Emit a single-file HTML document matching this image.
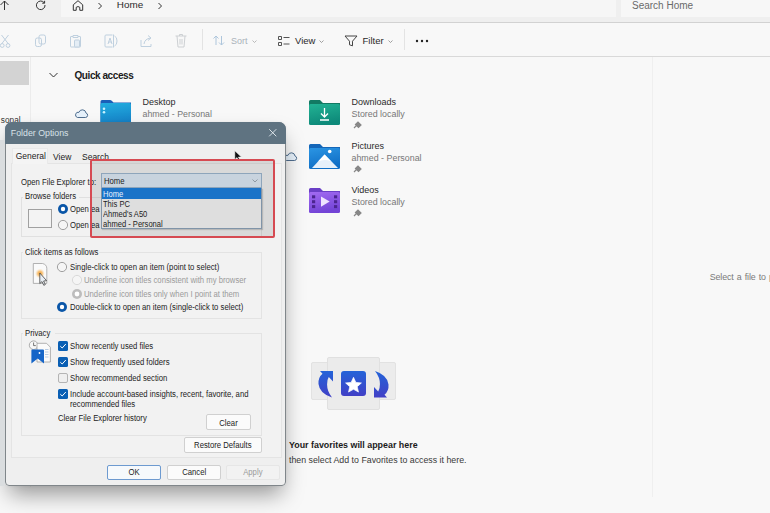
<!DOCTYPE html>
<html><head><meta charset="utf-8"><style>
html,body{margin:0;padding:0;width:770px;height:513px;overflow:hidden;background:#f8f8f8;font-family:"Liberation Sans", sans-serif}
.t{position:absolute;white-space:nowrap;line-height:1}
.r{position:absolute}
</style></head><body>
<div class="r" style="left:0px;top:0px;width:770px;height:22px;background:#efefef"></div>
<div class="r" style="left:61px;top:0px;width:555px;height:17px;background:#f6f6f6"></div>
<div class="r" style="left:621px;top:0px;width:149px;height:17px;background:#f7f7f7"></div>
<div class="r" style="left:0px;top:22px;width:770px;height:1px;background:#d2d2d2"></div>
<div class="r" style="left:0px;top:23px;width:770px;height:33px;background:#f8f8f8"></div>
<div class="r" style="left:0px;top:56px;width:770px;height:1px;background:#d9d9d9"></div>
<div class="r" style="left:0px;top:57px;width:770px;height:456px;background:#f8f8f8"></div>
<div class="r" style="left:30px;top:57px;width:1px;height:430px;background:#ececec"></div>
<div class="r" style="left:0px;top:61px;width:29px;height:24px;background:#d3d3d3"></div>
<div class="r" style="left:652px;top:57px;width:1px;height:440px;background:#efefef"></div>
<svg class="r" style="left:0px;top:0px" width="120" height="22" viewBox="0 0 120 22" fill="none" stroke="#333" stroke-width="1">
<path d="M4.5 10 V1 M0.5 5 L4.5 1 L8.5 5"/>
<path d="M44.2 2.8 A4.3 4.3 0 1 0 45 5" /><path d="M44.6 0.8 V3.2 H42.2"/>
<path d="M73.3 10.3 V4.8 L78 0.7 L82.7 4.8 V10.3 H79.8 V7.3 Q78 5.8 76.2 7.3 V10.3 Z"/>
<path d="M98.5 3 L101.5 6 L98.5 9"/>
</svg>
<div class="t" style="left:116.8px;top:0.42px;font-size:9.9px;color:#2a2a2a;font-weight:normal;letter-spacing:0px;">Home</div>
<svg class="r" style="left:150px;top:0px" width="20" height="22" fill="none" stroke="#333" stroke-width="1"><path d="M8.5 3 L11.5 6 L8.5 9"/></svg>
<div class="t" style="left:632px;top:0.54px;font-size:10px;color:#6a6a6a;font-weight:normal;letter-spacing:0px;">Search Home</div>
<svg class="r" style="left:0px;top:24px" width="200" height="33" fill="none" stroke="#bfd0df" stroke-width="1">
<path d="M1.5 11 L8.5 20 M8.5 11 L1.5 20"/><circle cx="2.2" cy="21.5" r="1.9"/><circle cx="8" cy="21.5" r="1.9"/>
<rect x="35.5" y="14" width="6" height="8.5" rx="1.8"/><rect x="39" y="11" width="6.5" height="9" rx="1.8"/>
<path d="M73 12.5 H71 Q70.5 12.5 70.5 13 V22.5 Q70.5 23 71 23 H80 Q80.5 23 80.5 22.5 V13 Q80.5 12.5 80 12.5 H78 M73 11.5 H78 V13.5 H73 Z"/><rect x="74.5" y="16" width="5" height="7" rx="0.8" fill="#e4edf5"/>
<path d="M112.5 11 H106 Q105 11 105 12 V22 Q105 23 106 23 H112.5 M108 20 L110 14 L112 20 M108.7 18 H111.3 M113.5 10.5 V23.5 M114.5 12 Q117 13 117 17 Q117 21 114.5 22"/>
<path d="M141 16 V22.5 H151 V20 M144 20 Q144.5 15 150.5 14 M148 11.5 L151 14 L148 16.5"/>
<path stroke="#cdd0d3" d="M175.5 12 H186.5 M177 12 L178 23 H184 L185 12 M179.5 12 V10.5 H182.5 V12 M180 15 V20.5 M182 15 V20.5"/>
</svg>
<div class="r" style="left:202px;top:29px;width:1px;height:21px;background:#e3e3e3"></div>
<svg class="r" style="left:210px;top:23px" width="240" height="33" fill="none" stroke-width="1">
<path stroke="#aec6dc" d="M6 13 V22 M3.5 15.5 L6 13 L8.5 15.5 M11.5 13 V22 M9 19.5 L11.5 22 L14 19.5"/>
<path stroke="#555" d="M68.5 13.5 h3 v3 h-3 z M68.5 19.5 h3 v3 h-3 z M73.5 14.5 H79.5 M73.5 21 H79.5"/>
<path stroke="#444" d="M135 13 H147 L142.5 18.2 V22.8 L139.5 21.8 V18.2 Z"/>
</svg>
<div class="t" style="left:231px;top:36.78px;font-size:9px;color:#a9b2ba;font-weight:normal;letter-spacing:0px;">Sort</div>
<svg class="r" style="left:251px;top:39px" width="8" height="6" fill="none" stroke="#aaa" stroke-width="0.8"><path d="M1.5 1.5 L3.5 3.5 L5.5 1.5"/></svg>
<div class="t" style="left:295px;top:36.36px;font-size:9.5px;color:#2a2a2a;font-weight:normal;letter-spacing:0px;">View</div>
<svg class="r" style="left:318px;top:39px" width="8" height="6" fill="none" stroke="#888" stroke-width="0.8"><path d="M1.5 1.5 L3.5 3.5 L5.5 1.5"/></svg>
<div class="t" style="left:362.5px;top:36.26px;font-size:9.5px;color:#2a2a2a;font-weight:normal;letter-spacing:0px;">Filter</div>
<svg class="r" style="left:387px;top:39px" width="8" height="6" fill="none" stroke="#888" stroke-width="0.8"><path d="M1.5 1.5 L3.5 3.5 L5.5 1.5"/></svg>
<div class="r" style="left:404px;top:29px;width:1px;height:21px;background:#e3e3e3"></div>
<svg class="r" style="left:414px;top:38px" width="18" height="6"><circle cx="3" cy="3" r="1.2" fill="#222"/><circle cx="8" cy="3" r="1.2" fill="#222"/><circle cx="13" cy="3" r="1.2" fill="#222"/></svg>
<svg class="r" style="left:48px;top:71px" width="12" height="8" fill="none" stroke="#333" stroke-width="1"><path d="M1.5 2 L5.5 6 L9.5 2"/></svg>
<div class="t" style="left:74.5px;top:71.23px;font-size:10px;color:#1b1b1b;font-weight:bold;letter-spacing:-0.43px;">Quick access</div>
<svg class="r" style="left:100px;top:99px" width="32" height="28">
<defs><linearGradient id="gdk" x1="0" y1="0" x2="0.2" y2="1"><stop offset="0" stop-color="#22aee0"/><stop offset="1" stop-color="#1580c6"/></linearGradient></defs>
<path d="M0.5 2.5 Q0.5 1 2 1 H10 Q11 1 12 2 L13.5 3.5 H31 V27 H0.5 Z" fill="#1a5fb8"/>
<path d="M0.5 5.5 Q0.5 4 2 4 H29.5 Q31 4 31 5.5 V27 H0.5 Z" fill="url(#gdk)"/>
<circle cx="4" cy="9.8" r="1.3" fill="#c9f2ff"/><circle cx="4" cy="13.2" r="1.3" fill="#c9f2ff"/>
</svg>
<svg class="r" style="left:74px;top:107.5px" width="15" height="11" fill="#e6f1fb" stroke="#3d5f82" stroke-width="0.9"><path d="M3.5 9.5 H11.5 A2.3 2.3 0 0 0 12 5 A3.6 3.6 0 0 0 5 4.3 A2.7 2.7 0 0 0 3.5 9.5 Z"/></svg>
<div class="t" style="left:142.5px;top:97.98px;font-size:9px;color:#2b2b2b;font-weight:normal;letter-spacing:0px;">Desktop</div>
<div class="t" style="left:142.5px;top:109.55px;font-size:8.8px;color:#777;font-weight:normal;letter-spacing:0px;">ahmed - Personal</div>
<div class="t" style="left:0.8px;top:116.37px;font-size:8.3px;color:#333;font-weight:normal;letter-spacing:0px;">sonal</div>
<div class="t" style="left:-5px;top:350.54px;font-size:10px;color:#555;font-weight:normal;letter-spacing:0px;">C</div>
<div class="r" style="left:0px;top:331px;width:5px;height:1px;background:rgba(255,255,255,0.5)"></div>
<svg class="r" style="left:309px;top:100px" width="32" height="26">
<defs><linearGradient id="gd" x1="0" y1="0" x2="0.3" y2="1"><stop offset="0" stop-color="#22b394"/><stop offset="1" stop-color="#0e8a7a"/></linearGradient></defs>
<path d="M0 1.5 Q0 0 1.5 0 H11 L14 3 H31 V20 H0 Z" fill="#127a63"/>
<path d="M0 5.5 Q0 4 1.5 4 H29.5 Q31 4 31 5.5 V23.5 Q31 25 29.5 25 H1.5 Q0 25 0 23.5 Z" fill="url(#gd)"/><path d="M15.5 8 V17 M12 13.5 L15.5 17 L19 13.5 M11 20 H20" stroke="#fff" stroke-width="1.3" fill="none"/></svg>
<svg class="r" style="left:309px;top:144px" width="32" height="26">
<defs><linearGradient id="gp" x1="0" y1="0" x2="0.3" y2="1"><stop offset="0" stop-color="#2b95e3"/><stop offset="1" stop-color="#106fc6"/></linearGradient></defs>
<path d="M0 1.5 Q0 0 1.5 0 H11 L14 3 H31 V20 H0 Z" fill="#1466b8"/>
<path d="M0 5.5 Q0 4 1.5 4 H29.5 Q31 4 31 5.5 V23.5 Q31 25 29.5 25 H1.5 Q0 25 0 23.5 Z" fill="url(#gp)"/><path d="M3 24 L15.6 10.4 L29 24 Z" fill="#e6f1fb"/><path d="M9 17.5 L15.6 10.4 L22 17.3 Q15.5 14.5 9 17.5 Z" fill="#ffffff"/><circle cx="20.7" cy="7.5" r="1.8" fill="#fff"/></svg>
<svg class="r" style="left:309px;top:188px" width="32" height="26">
<defs><linearGradient id="gv" x1="0" y1="0" x2="0.3" y2="1"><stop offset="0" stop-color="#a36bf2"/><stop offset="1" stop-color="#7344d6"/></linearGradient></defs>
<path d="M0 1.5 Q0 0 1.5 0 H11 L14 3 H31 V20 H0 Z" fill="#6a3fc6"/>
<path d="M0 5.5 Q0 4 1.5 4 H29.5 Q31 4 31 5.5 V23.5 Q31 25 29.5 25 H1.5 Q0 25 0 23.5 Z" fill="url(#gv)"/><path d="M12 8.6 V18.7 L20.7 13.6 Z" fill="#efe4ff"/><rect x="3" y="7.3" width="3.2" height="3" fill="#4b2590"/><rect x="3" y="12.2" width="3.2" height="3" fill="#4b2590"/><rect x="3" y="17.1" width="3.2" height="3" fill="#4b2590"/><rect x="25" y="7.3" width="3.2" height="3" fill="#4b2590"/><rect x="25" y="12.2" width="3.2" height="3" fill="#4b2590"/><rect x="25" y="17.1" width="3.2" height="3" fill="#4b2590"/></svg>
<div class="t" style="left:351.5px;top:97.88px;font-size:9px;color:#2b2b2b;font-weight:normal;letter-spacing:0px;">Downloads</div>
<div class="t" style="left:351.5px;top:110.27px;font-size:8.9px;color:#777;font-weight:normal;letter-spacing:0px;">Stored locally</div>
<svg class="r" style="left:353px;top:121.4px" width="10" height="8"><path d="M1 7 L3.5 4.5 M2.5 3.5 L5 1 L8 4 L5.5 6.5 Z" stroke="#888" stroke-width="1.2" fill="#888"/></svg>
<div class="t" style="left:351.5px;top:141.88px;font-size:9px;color:#2b2b2b;font-weight:normal;letter-spacing:0px;">Pictures</div>
<div class="t" style="left:351.5px;top:154.27px;font-size:8.9px;color:#777;font-weight:normal;letter-spacing:0px;">ahmed - Personal</div>
<svg class="r" style="left:353px;top:165.39999999999998px" width="10" height="8"><path d="M1 7 L3.5 4.5 M2.5 3.5 L5 1 L8 4 L5.5 6.5 Z" stroke="#888" stroke-width="1.2" fill="#888"/></svg>
<div class="t" style="left:351.5px;top:185.88px;font-size:9px;color:#2b2b2b;font-weight:normal;letter-spacing:0px;">Videos</div>
<div class="t" style="left:351.5px;top:198.27px;font-size:8.9px;color:#777;font-weight:normal;letter-spacing:0px;">Stored locally</div>
<svg class="r" style="left:353px;top:209.39999999999998px" width="10" height="8"><path d="M1 7 L3.5 4.5 M2.5 3.5 L5 1 L8 4 L5.5 6.5 Z" stroke="#888" stroke-width="1.2" fill="#888"/></svg>
<svg class="r" style="left:283px;top:151px" width="15" height="11" fill="#e6f1fb" stroke="#3d5f82" stroke-width="0.9"><path d="M3.5 9.5 H11.5 A2.3 2.3 0 0 0 12 5 A3.6 3.6 0 0 0 5 4.3 A2.7 2.7 0 0 0 3.5 9.5 Z"/></svg>
<div class="r" style="left:311px;top:362px;width:85px;height:38px;background:#ececec;border:1px solid #e2e2e2;box-sizing:border-box;border-radius:2px"></div>
<div class="r" style="left:327px;top:357px;width:53px;height:53px;background:#ebebeb;border:1px solid #e0e0e0;box-sizing:border-box;border-radius:2px"></div>
<svg class="r" style="left:315px;top:368px" width="80" height="32">
<defs><linearGradient id="gst" x1="0" y1="0" x2="0" y2="1"><stop offset="0" stop-color="#2463d8"/><stop offset="1" stop-color="#4140c6"/></linearGradient></defs><rect x="26" y="3" width="25" height="25" rx="3" fill="url(#gst)"/>
<path transform="translate(38.5 17.2) scale(1.13) translate(-38.5 -15.5)" d="M38.5 8.5 L40.6 13 L45.5 13.5 L41.8 16.8 L42.9 21.6 L38.5 19.1 L34.1 21.6 L35.2 16.8 L31.5 13.5 L36.4 13 Z" fill="#fff" stroke="#fff" stroke-width="0.6" stroke-linejoin="round"/>
<path d="M18 3 H5 L7.5 5.8 Q3 9.5 3.5 16 Q4.5 25.5 17 29.5 Q12 23 12 16.5 Q12 11.5 13.8 9 L18 13.5 Z" fill="url(#gst)"/>
<path d="M59 29.5 H72 L69.5 26.7 Q74 23 73.5 16.5 Q72.5 7 60 3 Q65 9.5 65 16 Q65 21 63.2 23.5 L59 19 Z" fill="url(#gst)"/>
</svg>
<div class="t" style="left:289px;top:440.77px;font-size:8.9px;color:#1b1b1b;font-weight:bold;letter-spacing:0px;">Your favorites will appear here</div>
<div class="t" style="left:289px;top:455.55px;font-size:8.8px;color:#383838;font-weight:normal;letter-spacing:0px;">then select Add to Favorites to access it here.</div>
<div class="t" style="left:709.8px;top:272.67px;font-size:8.9px;color:#7a7a7a;font-weight:normal;letter-spacing:-0.15px;word-spacing:0.9px;">Select a file to preview.</div>
<div class="r" style="left:5px;top:122px;width:281px;height:364px;box-shadow:0 12px 22px -4px rgba(0,0,0,0.40), 0 0 3px 0px rgba(0,0,0,0.06);border-radius:7px 7px 4px 4px"></div>
<div class="r" style="left:0px;top:140px;width:5px;height:346px;background:#dadddf"></div>
<div class="r" style="left:5px;top:122px;width:281px;height:364px;background:#efefef;border:1px solid #80868a;box-sizing:border-box;border-radius:7px 7px 4px 4px;overflow:hidden"></div>
<div class="r" style="left:5px;top:122px;width:281px;height:22px;background:#5f7381;border-radius:7px 7px 0 0"></div>
<div class="t" style="left:10.8px;top:129.15px;font-size:8.8px;color:#d8e2e8;font-weight:normal;letter-spacing:0px;">Folder Options</div>
<svg class="r" style="left:268px;top:128px" width="10" height="10" fill="none" stroke="#e6edf2" stroke-width="0.9"><path d="M1.2 1.2 L8.3 8.3 M8.3 1.2 L1.2 8.3"/></svg>
<div class="r" style="left:11px;top:163px;width:271px;height:295px;background:#f2f2f2;border:1px solid #e4e4e4;box-sizing:border-box"></div>
<div class="r" style="left:12px;top:148px;width:36px;height:16px;background:#f4f4f4;border:1px solid #e9e9e9;border-bottom:none;box-sizing:border-box"></div>
<div class="t" style="left:15.7px;top:151.80px;font-size:8.5px;color:#222;font-weight:normal;letter-spacing:0px;">General</div>
<div class="t" style="left:53px;top:153.30px;font-size:8.5px;color:#222;font-weight:normal;letter-spacing:0px;">View</div>
<div class="t" style="left:82px;top:153.30px;font-size:8.5px;color:#222;font-weight:normal;letter-spacing:0px;">Search</div>
<div class="t" style="left:20.6px;top:177.51px;font-size:9.2px;color:#222;font-weight:normal;letter-spacing:0px;transform:scaleX(0.84);transform-origin:0 0;">Open File Explorer to:</div>
<div class="r" style="left:21px;top:197px;width:241px;height:40px;border:1px solid #e0e0e0;box-sizing:border-box"></div>
<div class="r" style="left:23px;top:192px;width:56px;height:10px;background:#f2f2f2"></div>
<div class="t" style="left:25px;top:192.21px;font-size:9.2px;color:#222;font-weight:normal;letter-spacing:0px;transform:scaleX(0.84);transform-origin:0 0;">Browse folders</div>
<div class="r" style="left:28px;top:209px;width:24px;height:19px;background:#f3f3f3;border:1px solid #a0a0a0;box-sizing:border-box"></div>
<div class="r" style="left:21px;top:252px;width:241px;height:67px;border:1px solid #e3e3e3;box-sizing:border-box"></div>
<div class="r" style="left:23px;top:246px;width:76px;height:10px;background:#f2f2f2"></div>
<div class="t" style="left:25px;top:247.71px;font-size:9.2px;color:#222;font-weight:normal;letter-spacing:0px;transform:scaleX(0.84);transform-origin:0 0;">Click items as follows</div>
<div class="t" style="left:70px;top:262.51px;font-size:9.2px;color:#222;font-weight:normal;letter-spacing:0px;transform:scaleX(0.84);transform-origin:0 0;">Single-click to open an item (point to select)</div>
<div class="t" style="left:84.4px;top:275.91px;font-size:9.2px;color:#9a9a9a;font-weight:normal;letter-spacing:0px;transform:scaleX(0.84);transform-origin:0 0;">Underline icon titles consistent with my browser</div>
<div class="t" style="left:84.4px;top:289.51px;font-size:9.2px;color:#9a9a9a;font-weight:normal;letter-spacing:0px;transform:scaleX(0.84);transform-origin:0 0;">Underline icon titles only when I point at them</div>
<div class="t" style="left:70px;top:302.71px;font-size:9.2px;color:#222;font-weight:normal;letter-spacing:0px;transform:scaleX(0.84);transform-origin:0 0;">Double-click to open an item (single-click to select)</div>
<svg class="r" style="left:56.5px;top:203.2px" width="12" height="12"><circle cx="6" cy="6" r="5" fill="#0a56a8"/><circle cx="6" cy="6" r="2.2" fill="#fff"/></svg>
<svg class="r" style="left:56.5px;top:219px" width="12" height="12"><circle cx="6" cy="6" r="4.6" fill="#f5f5f5" stroke="#8a8a8a" stroke-width="0.8"/></svg>
<div class="t" style="left:69.7px;top:204.91px;font-size:9.2px;color:#222;font-weight:normal;letter-spacing:0px;transform:scaleX(0.84);transform-origin:0 0;">Open ea</div>
<div class="t" style="left:69.7px;top:220.71px;font-size:9.2px;color:#222;font-weight:normal;letter-spacing:0px;transform:scaleX(0.84);transform-origin:0 0;">Open ea</div>
<svg class="r" style="left:56.4px;top:260.8px" width="12" height="12"><circle cx="6" cy="6" r="4.6" fill="#f5f5f5" stroke="#8a8a8a" stroke-width="0.8"/></svg>
<svg class="r" style="left:71.3px;top:274.3px" width="12" height="12"><circle cx="6" cy="6" r="4.6" fill="#f5f5f5" stroke="#d2d2d2" stroke-width="0.8"/></svg>
<svg class="r" style="left:71.3px;top:287.8px" width="12" height="12"><circle cx="6" cy="6" r="5" fill="#bdbdbd"/><circle cx="6" cy="6" r="2.4" fill="#fff"/></svg>
<svg class="r" style="left:56.4px;top:300.8px" width="12" height="12"><circle cx="6" cy="6" r="5" fill="#0a56a8"/><circle cx="6" cy="6" r="2.2" fill="#fff"/></svg>
<svg class="r" style="left:32px;top:262px" width="18" height="26">
<defs><radialGradient id="glow"><stop offset="0" stop-color="#f29a1e"/><stop offset="0.5" stop-color="#f7c27a" stop-opacity="0.9"/><stop offset="1" stop-color="#fbe3c0" stop-opacity="0"/></radialGradient></defs>
<path d="M1.3 1.5 H10.5 Q14.8 2.5 14.8 6.5 V21.4 H1.3 Z" fill="#fafafa" stroke="#a0a0a0" stroke-width="0.8"/>
<circle cx="8" cy="11.5" r="5" fill="url(#glow)"/>
<path d="M7.8 11 V21.5 L10 19.6 L11.8 23.3 L13.3 22.6 L11.6 19 L14.6 18.7 Z" fill="#e8eef4" stroke="#444" stroke-width="0.8"/>
</svg>
<div class="r" style="left:21px;top:333px;width:241px;height:103px;border:1px solid #e3e3e3;box-sizing:border-box"></div>
<div class="r" style="left:23px;top:327px;width:32px;height:10px;background:#f2f2f2"></div>
<div class="t" style="left:25px;top:329.21px;font-size:9.2px;color:#222;font-weight:normal;letter-spacing:0px;transform:scaleX(0.84);transform-origin:0 0;">Privacy</div>
<svg class="r" style="left:28px;top:340px" width="24" height="25">
<circle cx="5.6" cy="5.2" r="4.3" fill="#f7f7f7" stroke="#9a9a9a" stroke-width="0.8"/><path d="M5.6 2.5 V5.6 H7.8" stroke="#555" stroke-width="0.8" fill="none"/>
<path d="M9 3.3 H18.5 L22.4 7.2 V22 H9 Z" fill="#fafafa" stroke="#a0a0a0" stroke-width="0.8"/>
<path d="M17 9.5 H20.5 M17 12 H20.5 M17 14.5 H20.5 M17 17 H20.5" stroke="#9bb8d8" stroke-width="0.7"/>
<path d="M3.4 10.5 Q3.4 9.5 4.4 9.5 H15 Q16 9.5 16 10.5 V23.5 L9.7 18.5 L3.4 23.5 Z" fill="#1565c8"/><circle cx="11.5" cy="13" r="0.9" fill="#fff"/>
</svg>
<svg class="r" style="left:58px;top:341.4px" width="10" height="10"><rect x="0" y="0" width="10" height="10" rx="1.5" fill="#0a5fb4"/><path d="M2.3 5.2 L4.2 7 L7.8 3" stroke="#fff" stroke-width="1" fill="none"/></svg>
<svg class="r" style="left:58px;top:357px" width="10" height="10"><rect x="0" y="0" width="10" height="10" rx="1.5" fill="#0a5fb4"/><path d="M2.3 5.2 L4.2 7 L7.8 3" stroke="#fff" stroke-width="1" fill="none"/></svg>
<svg class="r" style="left:58px;top:372.8px" width="10" height="10"><rect x="0.5" y="0.5" width="9" height="9" rx="1.5" fill="#efefef" stroke="#a5a5a5" stroke-width="0.8"/></svg>
<svg class="r" style="left:58px;top:389.1px" width="10" height="10"><rect x="0" y="0" width="10" height="10" rx="1.5" fill="#0a5fb4"/><path d="M2.3 5.2 L4.2 7 L7.8 3" stroke="#fff" stroke-width="1" fill="none"/></svg>
<div class="t" style="left:69.5px;top:342.01px;font-size:9.2px;color:#222;font-weight:normal;letter-spacing:0px;transform:scaleX(0.84);transform-origin:0 0;">Show recently used files</div>
<div class="t" style="left:69.5px;top:357.71px;font-size:9.2px;color:#222;font-weight:normal;letter-spacing:0px;transform:scaleX(0.84);transform-origin:0 0;">Show frequently used folders</div>
<div class="t" style="left:69.5px;top:373.71px;font-size:9.2px;color:#222;font-weight:normal;letter-spacing:0px;transform:scaleX(0.84);transform-origin:0 0;">Show recommended section</div>
<div class="t" style="left:69.5px;top:389.71px;font-size:9.2px;color:#222;font-weight:normal;letter-spacing:0px;transform:scaleX(0.84);transform-origin:0 0;">Include account-based insights, recent, favorite, and</div>
<div class="t" style="left:69.5px;top:399.91px;font-size:9.2px;color:#222;font-weight:normal;letter-spacing:0px;transform:scaleX(0.84);transform-origin:0 0;">recommended files</div>
<div class="t" style="left:58px;top:413.71px;font-size:9.2px;color:#222;font-weight:normal;letter-spacing:0px;transform:scaleX(0.84);transform-origin:0 0;">Clear File Explorer history</div>
<div class="r" style="left:205.6px;top:414px;width:45px;height:16px;background:#fbfbfb;border:1px solid #d0d0d0;box-sizing:border-box;border-radius:2px"></div>
<div class="t" style="left:205.6px;top:414.8px;width:45px;height:16px;line-height:16px;text-align:center;font-size:9.2px;color:#222;transform:scaleX(0.84)">Clear</div>
<div class="r" style="left:184px;top:437px;width:77.6px;height:15.5px;background:#fbfbfb;border:1px solid #d0d0d0;box-sizing:border-box;border-radius:2px"></div>
<div class="t" style="left:184px;top:437.8px;width:77.6px;height:15.5px;line-height:15.5px;text-align:center;font-size:9.2px;color:#222;transform:scaleX(0.84)">Restore Defaults</div>
<div class="r" style="left:107px;top:464.5px;width:54px;height:15.5px;background:#f6f9fc;border:1px solid #6d9ad0;box-sizing:border-box;border-radius:2px"></div>
<div class="t" style="left:107px;top:465.3px;width:54px;height:15.5px;line-height:15.5px;text-align:center;font-size:9.2px;color:#222;transform:scaleX(0.84)">OK</div>
<div class="r" style="left:166.6px;top:464.5px;width:54.3px;height:15.5px;background:#fbfbfb;border:1px solid #d0d0d0;box-sizing:border-box;border-radius:2px"></div>
<div class="t" style="left:166.6px;top:465.3px;width:54.3px;height:15.5px;line-height:15.5px;text-align:center;font-size:9.2px;color:#222;transform:scaleX(0.84)">Cancel</div>
<div class="r" style="left:226.3px;top:464.5px;width:53.7px;height:15.5px;background:#f2f2f2;border:1px solid #e6e6e6;box-sizing:border-box;border-radius:2px"></div>
<div class="t" style="left:226.3px;top:465.3px;width:53.7px;height:15.5px;line-height:15.5px;text-align:center;font-size:9.2px;color:#9a9a9a;transform:scaleX(0.84)">Apply</div>
<svg class="r" style="left:233.5px;top:150px" width="10" height="12"><path d="M0.8 0.8 V9.5 L3 7.6 L4.6 10.8 L6 10.2 L4.4 7.1 L7.4 7.1 Z" fill="#111" stroke="#fff" stroke-width="0.5"/></svg>
<div class="r" style="left:89.5px;top:159px;width:185px;height:79px;background:rgba(0,0,0,0.1);border:2px solid #d64a52;box-sizing:border-box;border-radius:2px"></div>
<div class="r" style="left:101px;top:173px;width:161px;height:15px;background:#c8d3de;border:1px solid #8ea5bb;box-sizing:border-box"></div>
<div class="t" style="left:104px;top:176.91px;font-size:9.2px;color:#222;font-weight:normal;letter-spacing:0px;transform:scaleX(0.84);transform-origin:0 0;">Home</div>
<svg class="r" style="left:251px;top:178px" width="8" height="6" fill="none" stroke="#7d8a96" stroke-width="0.8"><path d="M1.5 1.5 L4 4 L6.5 1.5"/></svg>
<div class="r" style="left:101px;top:187.5px;width:161px;height:41.5px;background:#dedede;border:1px solid #8094a8;border-top:none;box-sizing:border-box;box-shadow:1px 1px 1px rgba(0,0,0,0.15)"></div>
<div class="r" style="left:102px;top:188px;width:159px;height:10.5px;background:#1a73c8"></div>
<div class="t" style="left:103px;top:190.12px;font-size:8.6px;color:#e8f2ff;font-weight:normal;letter-spacing:0px;transform:scaleX(0.88);transform-origin:0 0;">Home</div>
<div class="t" style="left:103px;top:199.92px;font-size:8.6px;color:#222;font-weight:normal;letter-spacing:0px;transform:scaleX(0.88);transform-origin:0 0;">This PC</div>
<div class="t" style="left:103px;top:209.82px;font-size:8.6px;color:#222;font-weight:normal;letter-spacing:0px;transform:scaleX(0.88);transform-origin:0 0;">Ahmed's A50</div>
<div class="t" style="left:103px;top:219.52px;font-size:8.6px;color:#222;font-weight:normal;letter-spacing:0px;transform:scaleX(0.88);transform-origin:0 0;">ahmed - Personal</div>
</body></html>
